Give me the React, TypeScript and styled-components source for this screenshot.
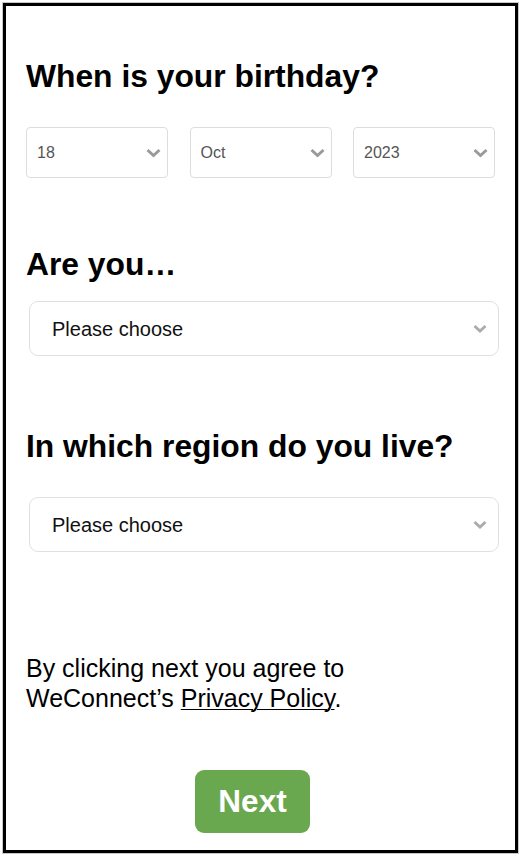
import * as React from 'react';
import styled, { createGlobalStyle } from 'styled-components';

const GlobalStyle = createGlobalStyle`
  html, body {
    margin: 0;
    padding: 0;
    background: #ffffff;
  }
  body {
    font-family: 'Liberation Sans', Arial, sans-serif;
    color: #000000;
  }
`;

const Page = styled.div`
  padding: 3px 5px 4px 3px;
`;

const Frame = styled.div`
  height: 850px;
  box-sizing: border-box;
  border: 3px solid #000000;
  box-shadow: 0 0 0 1px #c8c8c8;
  padding: 52px 16px 0 20px;
  display: flex;
  flex-direction: column;
`;

const Heading = styled.h2<{ $top: number }>`
  margin: ${(p) => p.$top}px 0 0 0;
  font-size: 31.8px;
  line-height: 36px;
  font-weight: 700;
`;

const DateRow = styled.div`
  margin-top: 33px;
  width: 469px;
  display: grid;
  grid-template-columns: repeat(3, 142px);
  justify-content: space-between;
`;

const Field = styled.div<{ $wide?: boolean; $top: number }>`
  position: relative;
  margin-top: ${(p) => p.$top}px;
  margin-left: ${(p) => (p.$wide ? 3 : 0)}px;
`;

const Select = styled.select<{ $wide?: boolean }>`
  appearance: none;
  -webkit-appearance: none;
  width: 100%;
  box-sizing: border-box;
  height: ${(p) => (p.$wide ? 55 : 51)}px;
  margin: 0;
  padding: ${(p) => (p.$wide ? '0 40px 0 22px' : '0 30px 0 10px')};
  border: 1px solid ${(p) => (p.$wide ? '#dde1e7' : '#dddddd')};
  border-radius: ${(p) => (p.$wide ? 9 : 4)}px;
  background: #ffffff;
  font-family: 'Liberation Sans', Arial, sans-serif;
  font-size: ${(p) => (p.$wide ? 20 : 16)}px;
  color: ${(p) => (p.$wide ? '#111111' : '#555555')};
  outline: none;
`;

const Chevron = styled.svg<{ $wide?: boolean }>`
  position: absolute;
  top: 50%;
  right: ${(p) => (p.$wide ? 12 : 7)}px;
  transform: translateY(-50%);
  pointer-events: none;
`;

const Notice = styled.p`
  margin: 101px 0 0 0;
  font-size: 25px;
  line-height: 30px;
  font-weight: 400;
`;

const PolicyLink = styled.a`
  color: #000000;
  text-decoration: underline;
  text-underline-offset: 2px;
  text-decoration-thickness: 1px;
`;

const Actions = styled.div`
  margin-top: 57px;
  display: flex;
  padding-left: 169px;
`;

const NextButton = styled.button`
  width: 115px;
  height: 63px;
  border: none;
  border-radius: 9px;
  background: #6aa84f;
  color: #ffffff;
  font-family: 'Liberation Sans', Arial, sans-serif;
  font-size: 31.5px;
  font-weight: 700;
  cursor: pointer;
`;

const ChevronIcon: React.FC<{ wide?: boolean }> = ({ wide }) =>
  wide ? (
    <Chevron $wide width="14" height="9" viewBox="0 0 14 9">
      <polyline points="1.5,1.5 7,6.5 12.5,1.5" fill="none" stroke="#ababab" strokeWidth="2.8" />
    </Chevron>
  ) : (
    <Chevron width="15" height="9" viewBox="0 0 15 9">
      <polyline points="1.5,1.5 7.5,7 13.5,1.5" fill="none" stroke="#9a9a9a" strokeWidth="3" />
    </Chevron>
  );

const DateSelect: React.FC<{ value: string; options: string[] }> = ({ value, options }) => (
  <Field $top={0}>
    <Select defaultValue={value}>
      {options.map((o) => (
        <option key={o}>{o}</option>
      ))}
    </Select>
    <ChevronIcon />
  </Field>
);

const ChoiceSelect: React.FC<{ top: number }> = ({ top }) => (
  <Field $wide $top={top}>
    <Select $wide defaultValue="Please choose">
      <option>Please choose</option>
    </Select>
    <ChevronIcon wide />
  </Field>
);

const days = Array.from({ length: 31 }, (_, i) => String(i + 1));
const months = ['Jan', 'Feb', 'Mar', 'Apr', 'May', 'Jun', 'Jul', 'Aug', 'Sep', 'Oct', 'Nov', 'Dec'];
const years = Array.from({ length: 100 }, (_, i) => String(2023 - i));

const App: React.FC = () => {
  return (
    <Page>
      <GlobalStyle />
      <Frame>
        <Heading $top={0}>When is your birthday?</Heading>
        <DateRow>
          <DateSelect value="18" options={days} />
          <DateSelect value="Oct" options={months} />
          <DateSelect value="2023" options={years} />
        </DateRow>

        <Heading $top={68}>Are you…</Heading>
        <ChoiceSelect top={19} />

        <Heading $top={72}>In which region do you live?</Heading>
        <ChoiceSelect top={33} />

        <Notice>
          By clicking next you agree to
          <br />
          WeConnect’s <PolicyLink href="#">Privacy Policy</PolicyLink>.
        </Notice>

        <Actions>
          <NextButton>Next</NextButton>
        </Actions>
      </Frame>
    </Page>
  );
};

export default App;
